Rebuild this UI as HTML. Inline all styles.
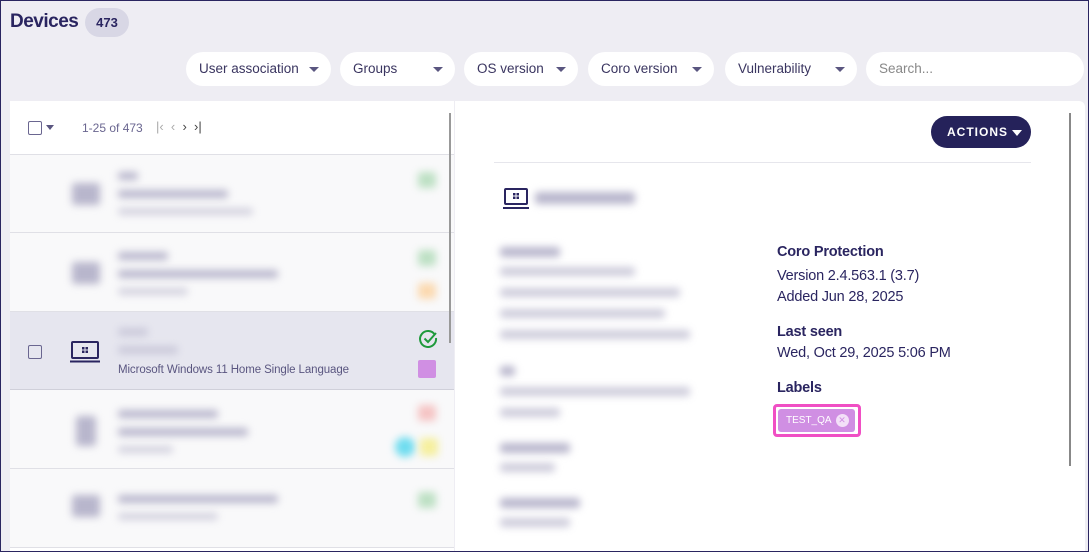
<!DOCTYPE html>
<html><head><style>
*{box-sizing:border-box;margin:0;padding:0}
body{width:1089px;height:552px;overflow:hidden;background:#eeedf3;font-family:"Liberation Sans",sans-serif;color:#2a2560;position:relative}
.frame{position:absolute;left:0;top:0;width:1089px;height:552px;border:1px solid #2a2560;pointer-events:none;z-index:9}
.abs{position:absolute}
.pill{position:absolute;top:52px;height:34px;background:#fff;border-radius:17px;font-size:13.5px;color:#3a3560;padding:0 13px;line-height:34px}
.pill .ar{position:absolute;right:12px;top:15px;width:0;height:0;border-left:5px solid transparent;border-right:5px solid transparent;border-top:5px solid #5a5680}
.blur{filter:blur(4px);background:#b8b6cc;position:absolute;border-radius:3px}
.row{position:absolute;left:10px;width:444px;border-bottom:1px solid #e0e0e6;background:#f9f9fa}
.t{position:absolute;font-size:14.5px;color:#2a2560;letter-spacing:-0.2px}
.b{font-weight:bold}
</style></head><body>
<div class="frame"></div>
<div class="abs b" style="left:10px;top:11px;font-size:19px;letter-spacing:-0.5px;color:#2a2560">Devices</div>
<div class="abs" style="left:85px;top:8px;width:44px;height:29px;border-radius:15px;background:#d8d7e5;font-size:13px;font-weight:bold;text-align:center;line-height:29px">473</div>
<div class="pill" style="left:186px;width:145px">User association<span class="ar"></span></div>
<div class="pill" style="left:340px;width:115px">Groups<span class="ar"></span></div>
<div class="pill" style="left:464px;width:114px">OS version<span class="ar"></span></div>
<div class="pill" style="left:588px;width:126px">Coro version<span class="ar"></span></div>
<div class="pill" style="left:725px;width:132px">Vulnerability<span class="ar"></span></div>
<div class="pill" style="left:866px;width:218px;color:#888">Search...</div>

<div class="abs" style="left:10px;top:101px;width:444px;height:451px;background:#fff"></div>
<div class="abs" style="left:28px;top:121px;width:14px;height:14px;border:1.5px solid #6a6690;border-radius:2px"></div>
<div class="abs" style="left:46px;top:125px;border-left:4px solid transparent;border-right:4px solid transparent;border-top:5px solid #5a5680"></div>
<div class="abs" style="left:82px;top:121px;font-size:12px;color:#6a6690">1-25 of 473</div>
<div class="abs" style="left:156px;top:119px;font-size:13px;color:#aaa">|‹ &nbsp;‹ &nbsp;<span style="color:#444">› &nbsp;›|</span></div>
<div class="abs" style="left:10px;top:154px;width:444px;height:1px;background:#e0e0e6"></div>
<div class="abs" style="left:449px;top:113px;width:2px;height:230px;background:#999;z-index:2"></div>

<div class="row" style="top:155px;height:78px"></div>
<div class="blur" style="left:72px;top:183px;width:28px;height:22px"></div>
<div class="blur" style="left:118px;top:172px;width:20px;height:8px"></div>
<div class="blur" style="left:118px;top:190px;width:110px;height:8px"></div>
<div class="blur" style="left:118px;top:208px;width:135px;height:7px;opacity:.6"></div>
<div class="blur" style="left:418px;top:172px;width:18px;height:16px;background:#bde0c4"></div>
<div class="row" style="top:233px;height:79px"></div>
<div class="blur" style="left:72px;top:262px;width:28px;height:22px"></div>
<div class="blur" style="left:118px;top:252px;width:50px;height:8px"></div>
<div class="blur" style="left:118px;top:270px;width:160px;height:8px"></div>
<div class="blur" style="left:118px;top:288px;width:70px;height:7px;opacity:.6"></div>
<div class="blur" style="left:418px;top:250px;width:18px;height:16px;background:#bde0c4"></div>
<div class="blur" style="left:418px;top:283px;width:18px;height:16px;background:#fbd9b0"></div>

<div class="abs" style="left:10px;top:312px;width:444px;height:78px;background:#e6e6ef;border-bottom:1px solid #d0d0da"></div>
<div class="abs" style="left:28px;top:345px;width:14px;height:14px;border:1.5px solid #6a6690;border-radius:2px"></div>
<svg class="abs" style="left:70px;top:341px" width="30" height="22" viewBox="0 0 30 22"><rect x="2" y="1" width="26" height="16" rx="1" fill="none" stroke="#2a2560" stroke-width="2"/><line x1="0" y1="20.5" x2="30" y2="20.5" stroke="#2a2560" stroke-width="2"/><rect x="12" y="6" width="2.5" height="2.5" fill="#2a2560"/><rect x="15.5" y="6" width="2.5" height="2.5" fill="#2a2560"/><rect x="12" y="9.5" width="2.5" height="2.5" fill="#2a2560"/><rect x="15.5" y="9.5" width="2.5" height="2.5" fill="#2a2560"/></svg>
<div class="blur" style="left:118px;top:328px;width:30px;height:8px;opacity:.6"></div>
<div class="blur" style="left:118px;top:346px;width:60px;height:8px;opacity:.6"></div>
<div class="abs" style="left:118px;top:364px;font-size:11.5px;color:#5a5680;letter-spacing:-0.1px">Microsoft Windows 11 Home Single Language</div>
<svg class="abs" style="left:419px;top:329px" width="19" height="19" viewBox="0 0 19 19"><path d="M16 6 A8 8 0 1 0 17 9" fill="none" stroke="#1f9a3c" stroke-width="2"/><path d="M5.5 9.5 L9 13 L17 4" fill="none" stroke="#1f9a3c" stroke-width="2"/></svg>
<div class="abs" style="left:418px;top:360px;width:18px;height:18px;background:#d08fe3;border-radius:2px"></div>

<div class="row" style="top:390px;height:79px"></div>
<div class="blur" style="left:76px;top:416px;width:20px;height:30px"></div>
<div class="blur" style="left:118px;top:410px;width:100px;height:8px"></div>
<div class="blur" style="left:118px;top:428px;width:130px;height:8px"></div>
<div class="blur" style="left:118px;top:446px;width:55px;height:7px;opacity:.6"></div>
<div class="blur" style="left:418px;top:405px;width:18px;height:16px;background:#f5c4c4"></div>
<div class="blur" style="left:395px;top:437px;width:20px;height:20px;background:#6fdcef;border-radius:50%"></div>
<div class="blur" style="left:420px;top:438px;width:18px;height:18px;background:#f5ef9e"></div>
<div class="row" style="top:469px;height:79px"></div>
<div class="blur" style="left:72px;top:495px;width:28px;height:22px"></div>
<div class="blur" style="left:118px;top:495px;width:160px;height:8px"></div>
<div class="blur" style="left:118px;top:513px;width:100px;height:7px;opacity:.6"></div>
<div class="blur" style="left:418px;top:492px;width:18px;height:16px;background:#bde0c4"></div>

<div class="abs" style="left:455px;top:101px;width:630px;height:451px;background:#fff;border-radius:0 6px 0 0"></div>
<div class="abs" style="left:1069px;top:113px;width:2px;height:353px;background:#888"></div>
<div class="abs b" style="left:931px;top:116px;width:100px;height:32px;border-radius:16px;background:#25225a;color:#fff;font-size:12px;letter-spacing:1px;line-height:32px;padding-left:16px">ACTIONS<span style="display:inline-block;margin-left:4px;border-left:5px solid transparent;border-right:5px solid transparent;border-top:6px solid #fff;vertical-align:middle"></span></div>
<div class="abs" style="left:494px;top:162px;width:537px;height:1px;background:#e6e6ec"></div>
<svg class="abs" style="left:503px;top:188px" width="26" height="22" viewBox="0 0 26 22"><rect x="2" y="1" width="22" height="15" rx="1" fill="none" stroke="#2a2560" stroke-width="2"/><line x1="0" y1="20" x2="26" y2="20" stroke="#2a2560" stroke-width="2"/><rect x="10" y="5" width="2.5" height="2.5" fill="#2a2560"/><rect x="13.5" y="5" width="2.5" height="2.5" fill="#2a2560"/><rect x="10" y="8.5" width="2.5" height="2.5" fill="#2a2560"/><rect x="13.5" y="8.5" width="2.5" height="2.5" fill="#2a2560"/></svg>
<div class="blur" style="left:535px;top:192px;width:100px;height:12px"></div>
<div class="blur" style="left:500px;top:247px;width:60px;height:10px"></div>
<div class="blur" style="left:500px;top:267px;width:135px;height:9px;opacity:.7"></div>
<div class="blur" style="left:500px;top:288px;width:180px;height:9px;opacity:.7"></div>
<div class="blur" style="left:500px;top:309px;width:165px;height:9px;opacity:.7"></div>
<div class="blur" style="left:500px;top:330px;width:190px;height:9px;opacity:.7"></div>
<div class="blur" style="left:500px;top:366px;width:15px;height:10px"></div>
<div class="blur" style="left:500px;top:387px;width:190px;height:9px;opacity:.7"></div>
<div class="blur" style="left:500px;top:408px;width:60px;height:9px;opacity:.7"></div>
<div class="blur" style="left:500px;top:443px;width:70px;height:10px"></div>
<div class="blur" style="left:500px;top:463px;width:55px;height:9px;opacity:.7"></div>
<div class="blur" style="left:500px;top:498px;width:80px;height:10px"></div>
<div class="blur" style="left:500px;top:518px;width:70px;height:9px;opacity:.7"></div>
<div class="t b" style="left:777px;top:244px">Coro Protection</div>
<div class="t" style="left:777px;top:268px">Version 2.4.563.1 (3.7)</div>
<div class="t" style="left:777px;top:289px">Added Jun 28, 2025</div>
<div class="t b" style="left:777px;top:324px">Last seen</div>
<div class="t" style="left:777px;top:345px">Wed, Oct 29, 2025 5:06 PM</div>
<div class="t b" style="left:777px;top:380px">Labels</div>
<div class="abs" style="left:773px;top:404px;width:88px;height:33px;border:3px solid #f04fc4;border-radius:4px"></div>
<div class="abs" style="left:778px;top:409px;width:77px;height:23px;background:#d08fe3;border-radius:3px;color:#fff;font-size:10px;line-height:23px;padding-left:8px">TEST_QA<span style="display:inline-block;width:13px;height:13px;border-radius:50%;background:#f3e0f8;color:#d08fe3;font-size:9px;line-height:13px;text-align:center;margin-left:4px;vertical-align:middle">✕</span></div>
</body></html>
